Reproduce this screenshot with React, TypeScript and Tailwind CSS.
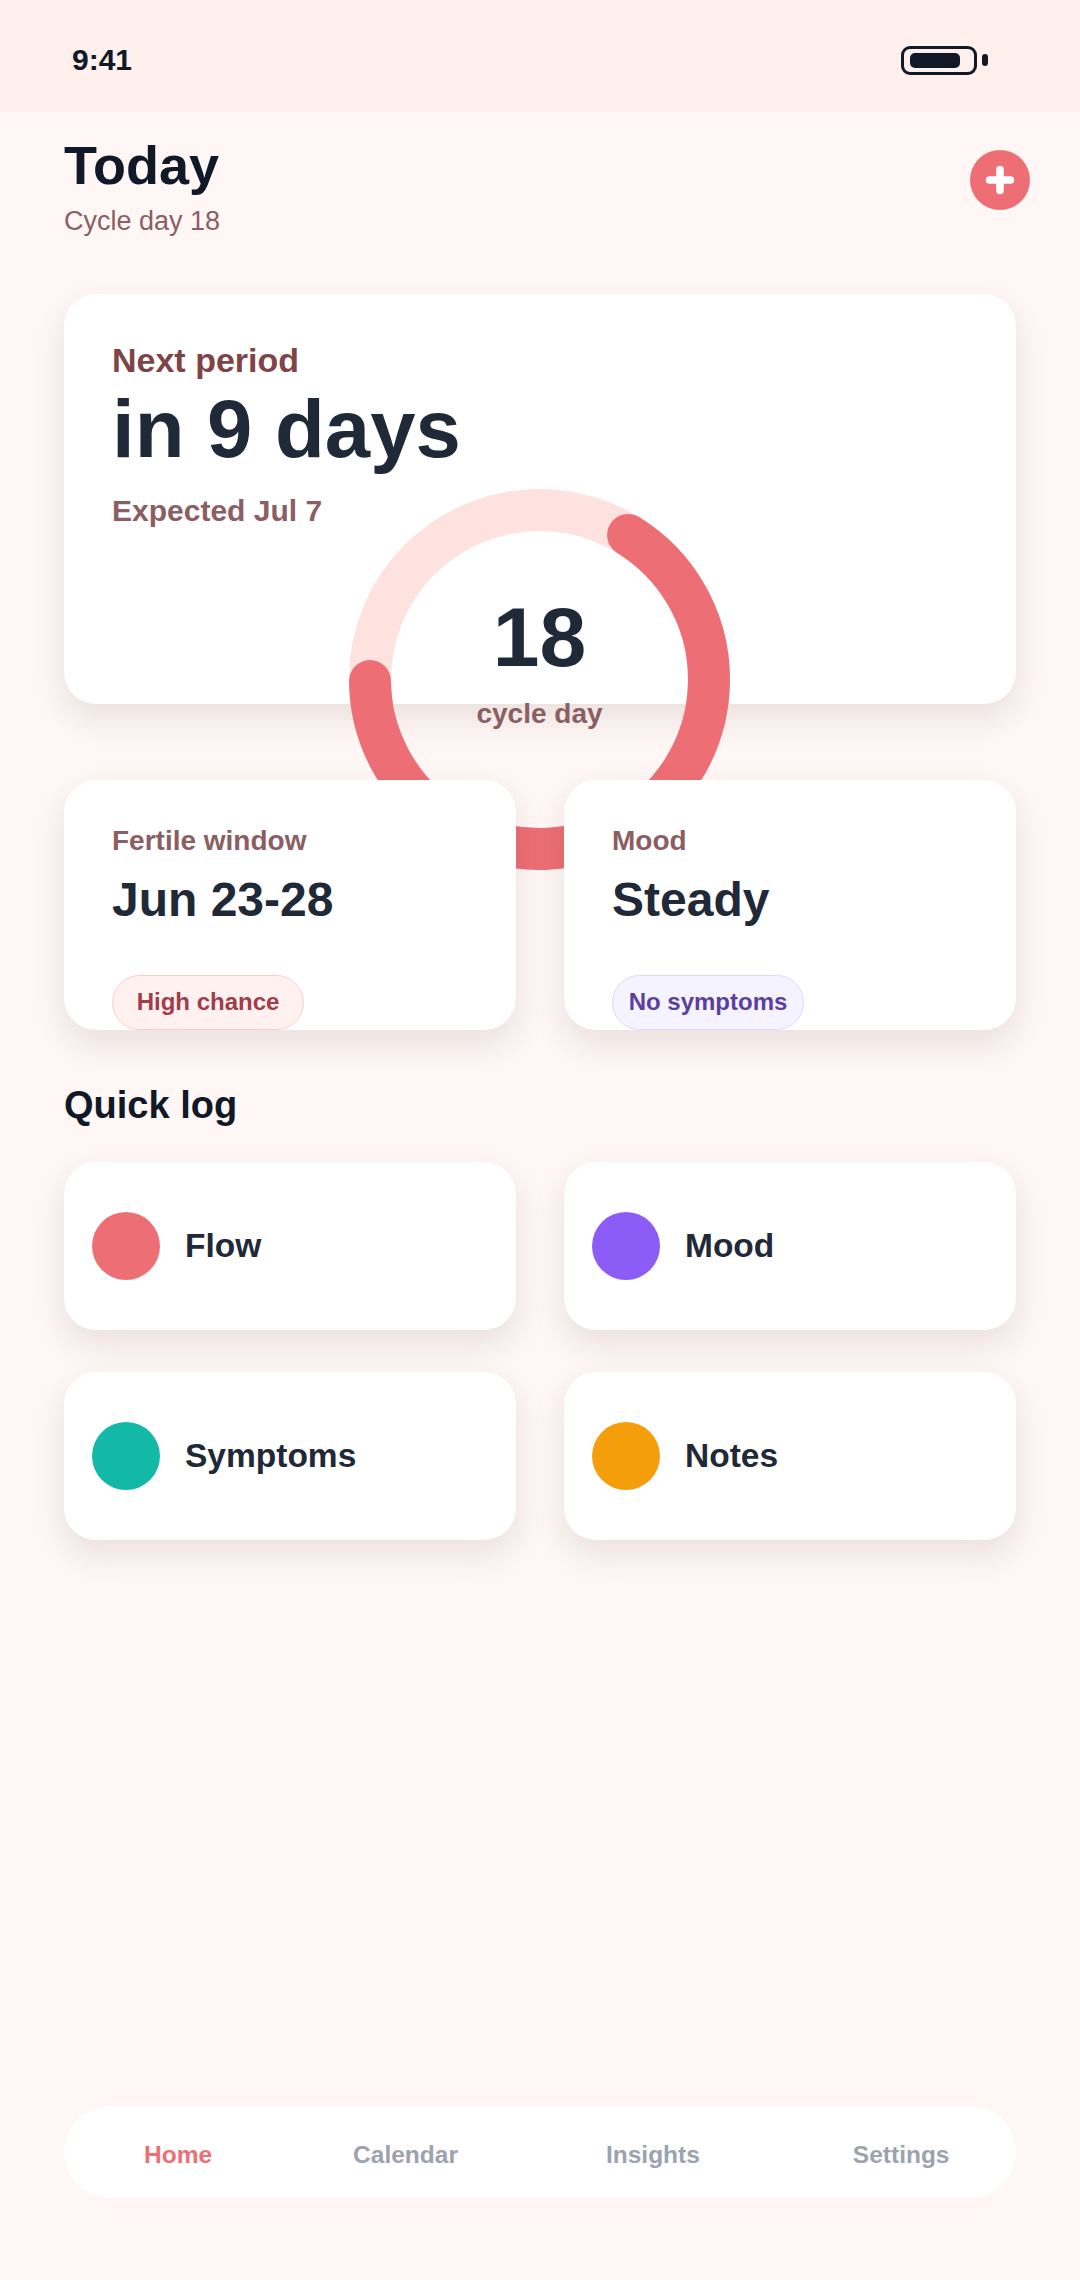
const TILES = [
  { label: 'Flow', dot: 'bg-[#ed6f75]' },
  { label: 'Mood', dot: 'bg-[#8b5cf6]' },
  { label: 'Symptoms', dot: 'bg-[#14b8a6]' },
  { label: 'Notes', dot: 'bg-[#f59e0b]' },
];

const CARD_SHADOW = 'shadow-[0_14px_34px_rgba(40,30,30,0.10)]';

function StatCard({ label, value, pill, pillClass }: { label: string; value: string; pill: string; pillClass: string }) {
  return (
    <div className={`h-[250px] overflow-hidden rounded-[32px] bg-white pl-[48px] pt-[45px] ${CARD_SHADOW}`}>
      <div className="text-[28px] font-semibold text-[#8b5e63]">{label}</div>
      <div className="mt-[15px] text-[48px] font-bold text-[#1f2937]">{value}</div>
      <span className={`mt-[48px] inline-block w-[192px] rounded-full border pb-[13px] pt-[12px] text-center text-[24px] font-semibold ${pillClass}`}>{pill}</span>
    </div>
  );
}

function CycleRing() {
  return (
    <div className="absolute left-[285px] top-[195px] z-10 h-[381px] w-[381px]">
      <svg width="381" height="381" viewBox="0 0 381 381" fill="none">
        <circle cx="190.5" cy="190.5" r="169.5" stroke="#fde2df" strokeWidth="42" />
        <path d="M279.1 46A169.5 169.5 0 1 1 21 192" stroke="#ed6f75" strokeWidth="42" strokeLinecap="round" />
      </svg>
      <div className="absolute inset-x-0 top-[100px] flex flex-col items-center">
        <span className="text-[84px] font-bold text-[#1f2937]">18</span>
        <span className="mt-[12px] text-[28px] font-semibold text-[#8b5e63]">cycle day</span>
      </div>
    </div>
  );
}

export default function App() {
  return (
    <div className="flex min-h-[2280px] flex-col bg-[#fff7f5] font-['Liberation_Sans',Arial,sans-serif] leading-[normal]">
      <div className="flex h-[112px] items-center justify-between bg-[#fff0ed] pl-[72px] pr-[92px] pt-[8px]">
        <span className="text-[30px] font-bold text-[#111827]">9:41</span>
        <div className="flex items-center gap-[5px]">
          <div className="flex h-[29px] w-[76px] items-center rounded-[9px] border-[3px] border-[#111827] pl-[6px]">
            <div className="h-[15px] w-[50px] rounded-[5px] bg-[#111827]" />
          </div>
          <div className="h-[12px] w-[6px] rounded-[3px] bg-[#111827]" />
        </div>
      </div>

      <div className="flex items-start justify-between pl-[64px] pr-[50px] pt-[22px]">
        <div>
          <h1 className="text-[54px] font-bold text-[#111827]">Today</h1>
          <p className="mt-[10px] text-[27px] text-[#8b5e63]">Cycle day 18</p>
        </div>
        <button className="mt-[16px] flex h-[60px] w-[60px] items-center justify-center rounded-full bg-[#ed6f75]">
          <svg width="30" height="30" viewBox="0 0 30 30" fill="none">
            <path d="M15 4.5v21M4.5 15h21" stroke="#fff" strokeWidth="7.5" strokeLinecap="round" />
          </svg>
        </button>
      </div>

      <div className="relative mx-[64px] mt-[57px]">
        <div className={`h-[410px] rounded-[32px] bg-white pl-[48px] pt-[47px] ${CARD_SHADOW}`}>
          <div className="text-[34px] font-semibold text-[#7f4448]">Next period</div>
          <div className="mt-[2px] text-[81.5px] font-bold text-[#1f2937]">in 9 days</div>
          <div className="mt-[18px] text-[30px] font-semibold text-[#8b5e63]">Expected Jul 7</div>
        </div>
        <CycleRing />
        <div className="relative z-20 mt-[76px] grid grid-cols-2 gap-[48px]">
          <StatCard label="Fertile window" value="Jun 23-28" pill="High chance" pillClass="border-[#fecdc8] bg-[#fff1ef] text-[#a33b4a]" />
          <StatCard label="Mood" value="Steady" pill="No symptoms" pillClass="border-[#ddd6fe] bg-[#f5f3ff] text-[#5b3f9f]" />
        </div>
      </div>

      <h2 className="mx-[64px] mt-[54px] text-[38px] font-bold text-[#111827]">Quick log</h2>

      <div className="mx-[64px] mt-[35px] grid grid-cols-2 gap-x-[48px] gap-y-[42px]">
        {TILES.map(t => (
          <div key={t.label} className={`flex h-[168px] items-center gap-[25px] rounded-[32px] bg-white pl-[28px] ${CARD_SHADOW}`}>
            <div className={`h-[68px] w-[68px] rounded-full ${t.dot}`} />
            <span className="text-[33.5px] font-semibold text-[#1f2937]">{t.label}</span>
          </div>
        ))}
      </div>

      <nav className="mx-[64px] mb-[82px] mt-auto flex h-[92px] items-center rounded-full bg-white pl-[80px] pt-[6px] text-[24.5px] font-semibold text-[#9ca3af]">
        <span className="text-[#ed6f75]">Home</span>
        <span className="ml-[141px]">Calendar</span>
        <span className="ml-[148px]">Insights</span>
        <span className="ml-[153px]">Settings</span>
      </nav>
    </div>
  );
}
